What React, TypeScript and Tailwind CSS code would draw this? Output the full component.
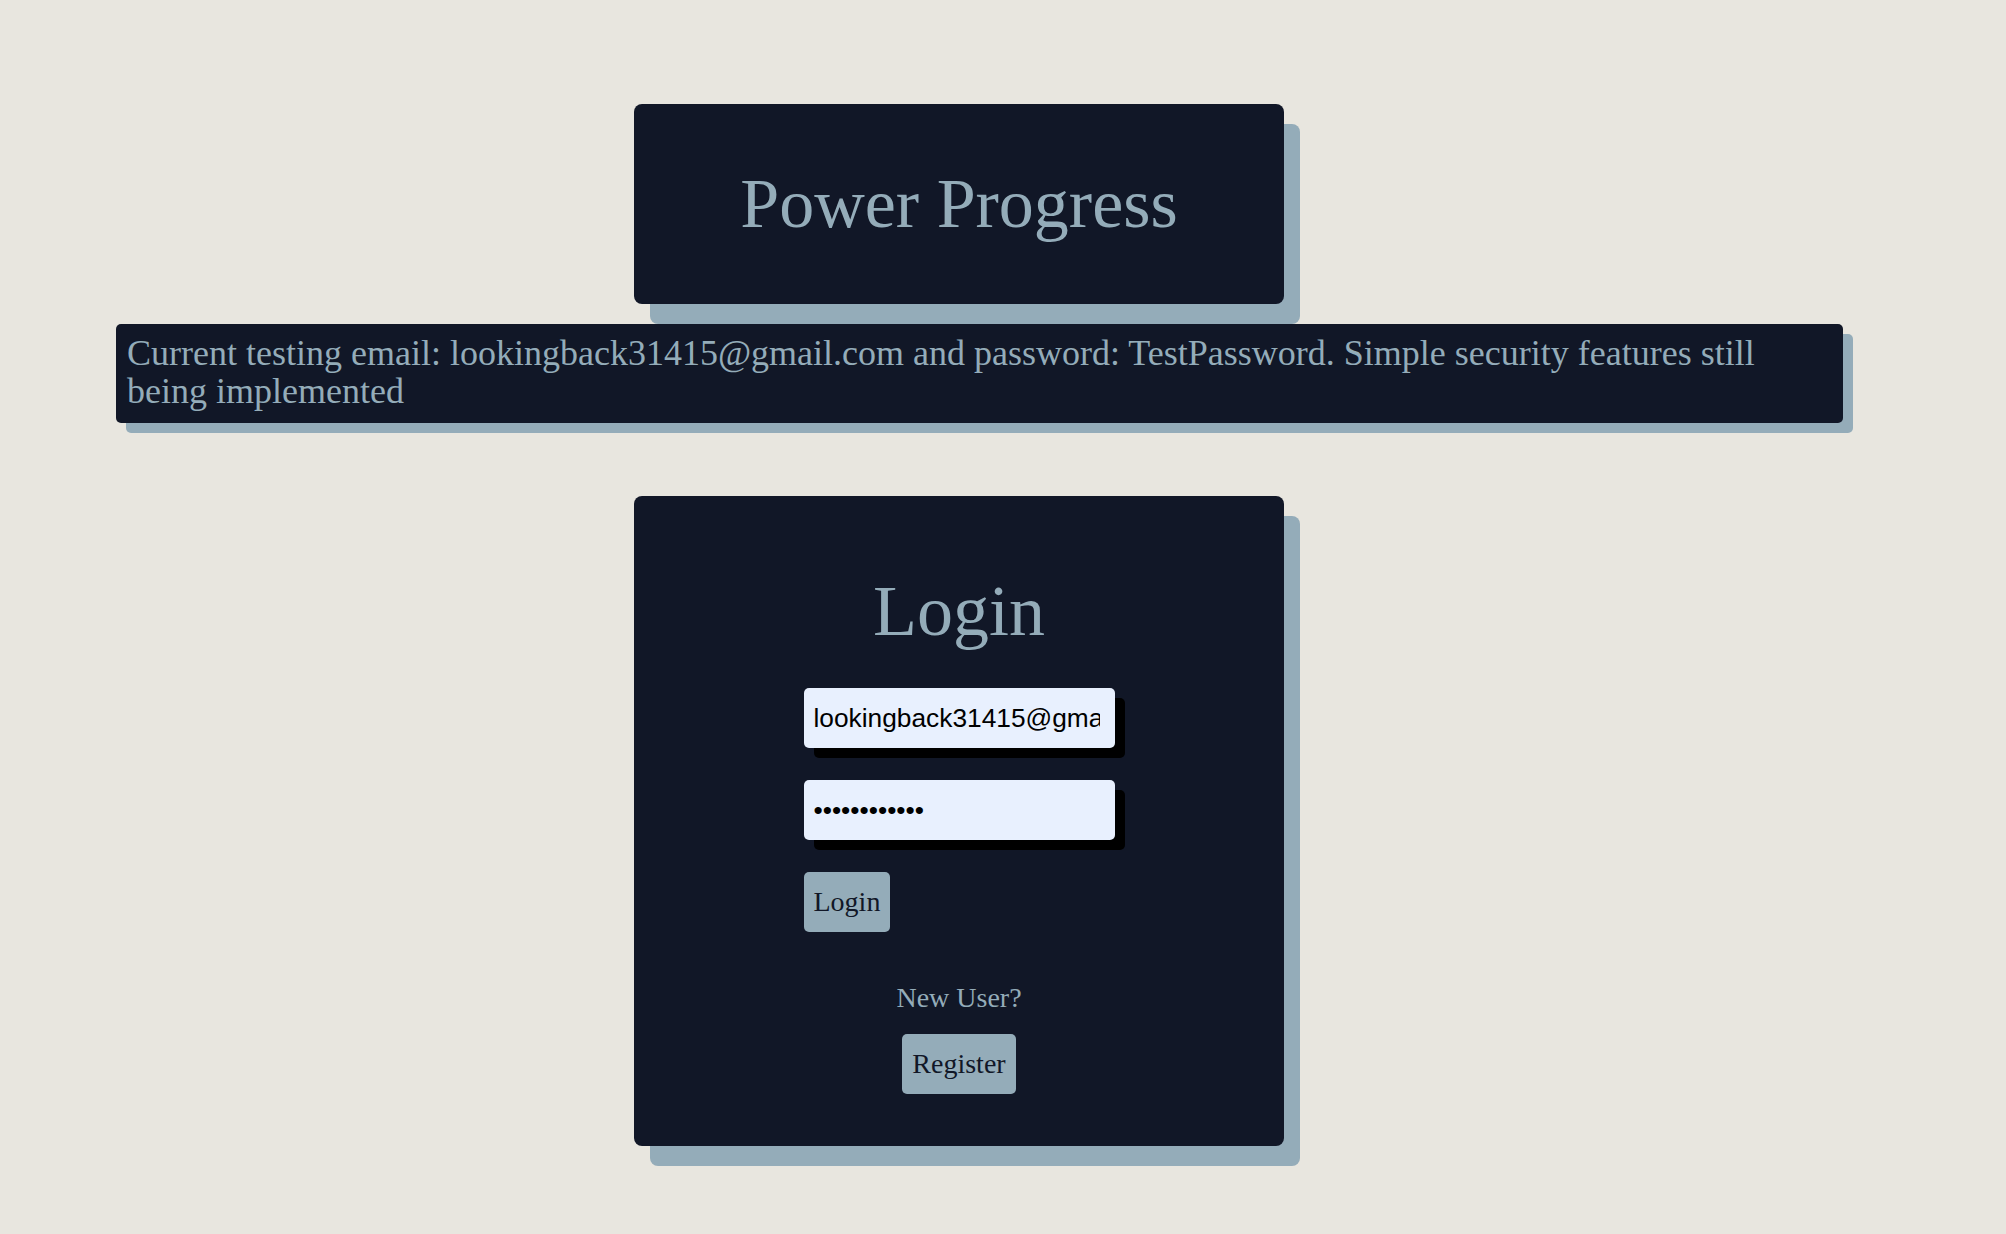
import React from "react";

export default function App() {
  return (
    <div className="min-h-screen w-full bg-[#e8e6df] pt-[104px] pb-[68px] font-['Liberation_Serif','Times_New_Roman',serif]">
      <div className="ml-[634px] flex h-[200px] w-[650px] items-center justify-center rounded-[8px] bg-[#111727] shadow-[16px_20px_0_#94acb9]">
        <h1 className="text-[70px] font-normal leading-none text-[#94acb9]">Power Progress</h1>
      </div>

      <div className="ml-[116px] mt-[20px] w-[1727px] rounded-[5px] bg-[#111727] pb-[13px] pl-[11px] pr-[10px] pt-[10px] text-[36px] leading-[38px] text-[#94acb9] shadow-[10px_10px_0_#94acb9]">
        Current testing email: lookingback31415@gmail.com and password: TestPassword. Simple security features still being implemented
      </div>

      <div className="ml-[634px] mt-[73px] flex w-[650px] flex-col items-center rounded-[8px] bg-[#111727] pb-[52px] pt-[75px] shadow-[16px_20px_0_#94acb9]">
        <h2 className="text-[72px] font-normal leading-[80px] text-[#94acb9]">Login</h2>

        <form className="mt-[37px] flex w-[311px] flex-col items-start gap-[32px]" onSubmit={(e) => e.preventDefault()}>
          <input
            type="email"
            readOnly
            value="lookingback31415@gmail.com"
            className="h-[60px] w-full rounded-[5px] bg-[#e8f0fe] pl-[10px] pr-[15px] font-['Liberation_Sans',Arial,sans-serif] text-[26.3px] text-black shadow-[10px_10px_0_#000] outline-none"
          />
          <input
            type="password"
            readOnly
            value="TestPassword"
            className="h-[60px] w-full rounded-[5px] bg-[#e8f0fe] pl-[10px] pr-[15px] font-['Liberation_Sans',Arial,sans-serif] text-[26.3px] text-black shadow-[10px_10px_0_#000] outline-none"
          />
          <button
            type="submit"
            className="flex h-[60px] items-center rounded-[5px] bg-[#94acb9] px-[10px] text-[28px] leading-none text-[#111727]"
          >
            Login
          </button>
        </form>

        <p className="mt-[50px] text-[28px] leading-[32px] text-[#94acb9]">New User?</p>
        <button
          type="button"
          className="mt-[20px] flex h-[60px] items-center rounded-[5px] bg-[#94acb9] px-[10px] text-[28px] leading-none text-[#111727]"
        >
          Register
        </button>
      </div>
    </div>
  );
}
